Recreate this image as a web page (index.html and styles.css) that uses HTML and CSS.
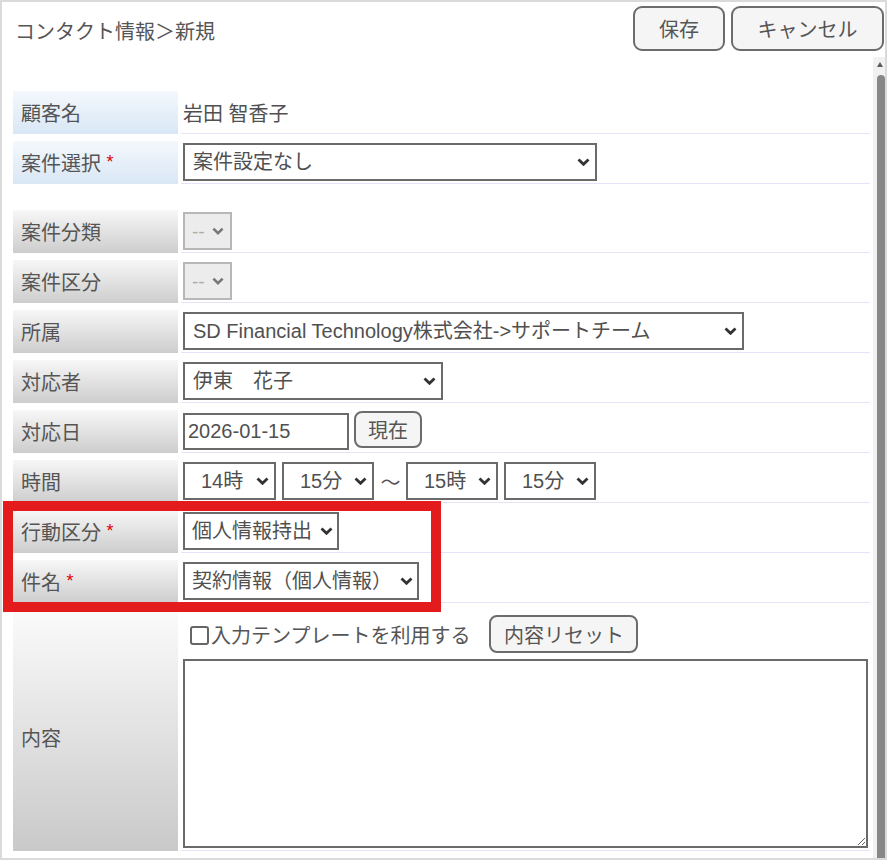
FILE: index.html
```html
<!DOCTYPE html>
<html lang="ja">
<head>
    <meta charset="UTF-8">
    <title>コンタクト情報 新規</title>
    <link rel="stylesheet" href="styles.css">
</head>
<body>
    <div class="frame">
        <div class="header">
            <h1 class="title">コンタクト情報＞新規</h1>
            <div class="actions">
                <button class="btn btn-save">保存</button>
                <button class="btn btn-cancel">キャンセル</button>
            </div>
        </div>

        <div class="body">
            <div class="form">
                <table class="grid">
                    <tr class="row">
                        <th class="lbl lbl-blue">顧客名</th>
                        <td class="val">岩田 智香子</td>
                    </tr>
                    <tr class="row">
                        <th class="lbl lbl-blue">案件選択 <span class="req">*</span></th>
                        <td class="val">
                            <span class="sel w-case">
                                <select><option>案件設定なし</option></select>
                                <svg class="chev" viewBox="0 0 13 8"><polyline points="1.5,1.5 6.5,6.3 11.5,1.5"/></svg>
                            </span>
                        </td>
                    </tr>
                    <tr class="gap"><td colspan="2"></td></tr>
                    <tr class="row">
                        <th class="lbl">案件分類</th>
                        <td class="val">
                            <span class="sel sel-off w-off">
                                <select disabled><option>--</option></select>
                                <svg class="chev" viewBox="0 0 13 8"><polyline points="1.5,1.5 6.5,6.3 11.5,1.5"/></svg>
                            </span>
                        </td>
                    </tr>
                    <tr class="row">
                        <th class="lbl">案件区分</th>
                        <td class="val">
                            <span class="sel sel-off w-off">
                                <select disabled><option>--</option></select>
                                <svg class="chev" viewBox="0 0 13 8"><polyline points="1.5,1.5 6.5,6.3 11.5,1.5"/></svg>
                            </span>
                        </td>
                    </tr>
                    <tr class="row">
                        <th class="lbl">所属</th>
                        <td class="val">
                            <span class="sel w-org">
                                <select><option>SD Financial Technology株式会社-&gt;サポートチーム</option></select>
                                <svg class="chev" viewBox="0 0 13 8"><polyline points="1.5,1.5 6.5,6.3 11.5,1.5"/></svg>
                            </span>
                        </td>
                    </tr>
                    <tr class="row">
                        <th class="lbl">対応者</th>
                        <td class="val">
                            <span class="sel w-staff">
                                <select><option>伊東　花子</option></select>
                                <svg class="chev" viewBox="0 0 13 8"><polyline points="1.5,1.5 6.5,6.3 11.5,1.5"/></svg>
                            </span>
                        </td>
                    </tr>
                    <tr class="row">
                        <th class="lbl">対応日</th>
                        <td class="val">
                            <div class="inline date-line">
                                <input type="text" class="text-in w-date" value="2026-01-15">
                                <button class="btn btn-small">現在</button>
                            </div>
                        </td>
                    </tr>
                    <tr class="row">
                        <th class="lbl">時間</th>
                        <td class="val">
                            <div class="inline time-line">
                                <span class="sel sel-time w-hour">
                                    <select><option>14時</option></select>
                                    <svg class="chev" viewBox="0 0 13 8"><polyline points="1.5,1.5 6.5,6.3 11.5,1.5"/></svg>
                                </span>
                                <span class="sel sel-time w-min">
                                    <select><option>15分</option></select>
                                    <svg class="chev" viewBox="0 0 13 8"><polyline points="1.5,1.5 6.5,6.3 11.5,1.5"/></svg>
                                </span>
                                <span class="tilde">～</span>
                                <span class="sel sel-time w-min">
                                    <select><option>15時</option></select>
                                    <svg class="chev" viewBox="0 0 13 8"><polyline points="1.5,1.5 6.5,6.3 11.5,1.5"/></svg>
                                </span>
                                <span class="sel sel-time w-min">
                                    <select><option>15分</option></select>
                                    <svg class="chev" viewBox="0 0 13 8"><polyline points="1.5,1.5 6.5,6.3 11.5,1.5"/></svg>
                                </span>
                            </div>
                        </td>
                    </tr>
                    <tr class="row">
                        <th class="lbl">行動区分 <span class="req">*</span></th>
                        <td class="val">
                            <span class="sel sel-tight w-act">
                                <select><option>個人情報持出</option></select>
                                <svg class="chev" viewBox="0 0 13 8"><polyline points="1.5,1.5 6.5,6.3 11.5,1.5"/></svg>
                            </span>
                        </td>
                    </tr>
                    <tr class="row">
                        <th class="lbl">件名 <span class="req">*</span></th>
                        <td class="val">
                            <span class="sel sel-tight w-subj">
                                <select><option>契約情報（個人情報）</option></select>
                                <svg class="chev" viewBox="0 0 13 8"><polyline points="1.5,1.5 6.5,6.3 11.5,1.5"/></svg>
                            </span>
                        </td>
                    </tr>
                    <tr class="row row-content">
                        <th class="lbl lbl-content">内容</th>
                        <td class="val val-content">
                            <div class="inline tpl-line">
                                <label class="check"><span class="box"></span>入力テンプレートを利用する</label>
                                <button class="btn btn-reset">内容リセット</button>
                            </div>
                            <textarea class="memo"></textarea>
                        </td>
                    </tr>
                </table>
            </div>
            <div class="scrollbar">
                <span class="arrow"></span>
                <span class="thumb"></span>
            </div>
        </div>

        <div class="highlight"></div>
    </div>
</body>
</html>
```

FILE: styles.css
```css
* {
    box-sizing: border-box;
    margin: 0;
    padding: 0;
}

body {
    font-family: "Liberation Sans", "Noto Sans CJK JP", sans-serif;
    font-size: 20px;
    color: #505050;
    background: #fff;
}

.frame {
    position: relative;
    width: 887px;
    height: 860px;
    border: 2px solid #dadada;
    display: flex;
    flex-direction: column;
    background: #fff;
}

/* header */
.header {
    height: 55px;
    display: flex;
    justify-content: space-between;
    align-items: flex-start;
}

.title {
    font-size: 20px;
    font-weight: normal;
    line-height: 20px;
    padding: 20px 0 0 13px;
    color: #555;
}

.actions {
    display: flex;
    gap: 6px;
    margin: 4px 1px 0 0;
}

.btn {
    font-family: inherit;
    font-size: 20px;
    color: #555;
    background: #f5f5f5;
    border: 2px solid #6c6c6c;
    border-radius: 9px;
    cursor: pointer;
}

.btn-save {
    width: 92px;
    height: 45px;
}

.btn-cancel {
    width: 153px;
    height: 45px;
}

.btn-small {
    width: 68px;
    height: 37px;
    border-radius: 8px;
    margin-top: -3px;
}

.btn-reset {
    width: 149px;
    height: 38px;
    border-radius: 8px;
}

/* body */
.body {
    flex: 1;
    display: flex;
    min-height: 0;
}

.form {
    flex: 1;
    overflow: hidden;
    padding: 27px 0 0 8px;
}

.scrollbar {
    width: 12px;
    background: #f1f1f1;
    display: flex;
    flex-direction: column;
    align-items: flex-end;
    padding-top: 5px;
}

.arrow {
    width: 0;
    height: 0;
    border-left: 3px solid transparent;
    border-right: 3px solid transparent;
    border-bottom: 5px solid #5a5a5a;
    margin-right: 2px;
}

.thumb {
    flex: 1;
    width: 8px;
    margin-top: 8px;
    background: #878787;
    border-radius: 4px 4px 0 0;
}

/* table */
.grid {
    width: 863px;
    table-layout: fixed;
    border-collapse: separate;
    border-spacing: 3px 7px;
}

.row {
    height: 43px;
}

.gap {
    height: 12px;
}

.row-content {
    height: 241px;
}

.lbl {
    width: 165px;
    padding: 0 0 0 8px;
    text-align: left;
    font-weight: normal;
    color: #555;
    vertical-align: middle;
    white-space: nowrap;
    background: linear-gradient(#f7f7f7, #cdcdcd);
}

.lbl-blue {
    background: linear-gradient(#f3f8fd, #d9e7f5);
}

.lbl-content {
    padding-top: 14px;
    background: linear-gradient(#fbfbfb, #c9c9c9);
}

.req {
    color: #e00000;
    font-size: 18px;
    position: relative;
    top: -3px;
}

.val {
    padding: 0 0 0 2px;
    border-bottom: 1px solid #e4e4f8;
    vertical-align: middle;
    color: #505050;
}

.val-content {
    vertical-align: top;
    padding-top: 5px;
}

.inline {
    display: flex;
    align-items: center;
}

.date-line {
    gap: 5px;
}

.time-line {
    gap: 6px;
}

.tilde {
    width: 25px;
    margin: 0 -3px 0 -2px;
    text-align: center;
    color: #555;
}

/* selects */
.sel {
    position: relative;
    display: inline-block;
    vertical-align: middle;
}

.sel select {
    appearance: none;
    -webkit-appearance: none;
    width: 100%;
    height: 38px;
    font-family: inherit;
    font-size: 20px;
    color: #505050;
    background: #fff;
    border: 2px solid #6a6a6a;
    border-radius: 0;
    padding: 0 26px 0 8px;
}

.sel .chev {
    position: absolute;
    right: 7px;
    top: 15px;
    width: 13px;
    height: 8px;
    fill: none;
    stroke: #333;
    stroke-width: 2.8;
    pointer-events: none;
}

.sel-off select {
    background: #e5e5e5;
    border-color: #9a9a9a;
    color: #888;
    font-size: 19px;
    padding: 0 0 0 7px;
}

.sel-off .chev {
    stroke: #777;
    width: 12px;
    right: 8px;
}

.sel-time select {
    padding-left: 16px;
}

.sel-tight select {
    padding: 0 20px 0 7px;
}

.sel-tight .chev {
    right: 6px;
}

.w-case { width: 414px; }
.w-off { width: 49px; }
.w-org { width: 561px; }
.w-staff { width: 260px; }
.w-hour { width: 93px; }
.w-min { width: 92px; }
.w-act { width: 156px; }
.w-subj { width: 236px; }

.text-in {
    height: 37px;
    font-family: inherit;
    font-size: 20px;
    color: #505050;
    border: 2px solid #6a6a6a;
    padding: 0 3px;
}

.w-date { width: 166px; }

/* content */
.tpl-line {
    height: 38px;
}

.check {
    display: flex;
    align-items: center;
    margin-left: 7px;
    margin-right: 19px;
    color: #555;
}

.box {
    width: 19px;
    height: 19px;
    border: 2px solid #666;
    border-radius: 3px;
    margin: 3px 2px 0 0;
    background: #fff;
}

.memo {
    display: block;
    width: 685px;
    height: 189px;
    margin-top: 6px;
    border: 2px solid #6a6a6a;
    font-family: inherit;
    font-size: 20px;
}

/* annotation */
.highlight {
    position: absolute;
    left: 1px;
    top: 499px;
    width: 438px;
    height: 111px;
    border: 10px solid #e31b1c;
    pointer-events: none;
}
```
